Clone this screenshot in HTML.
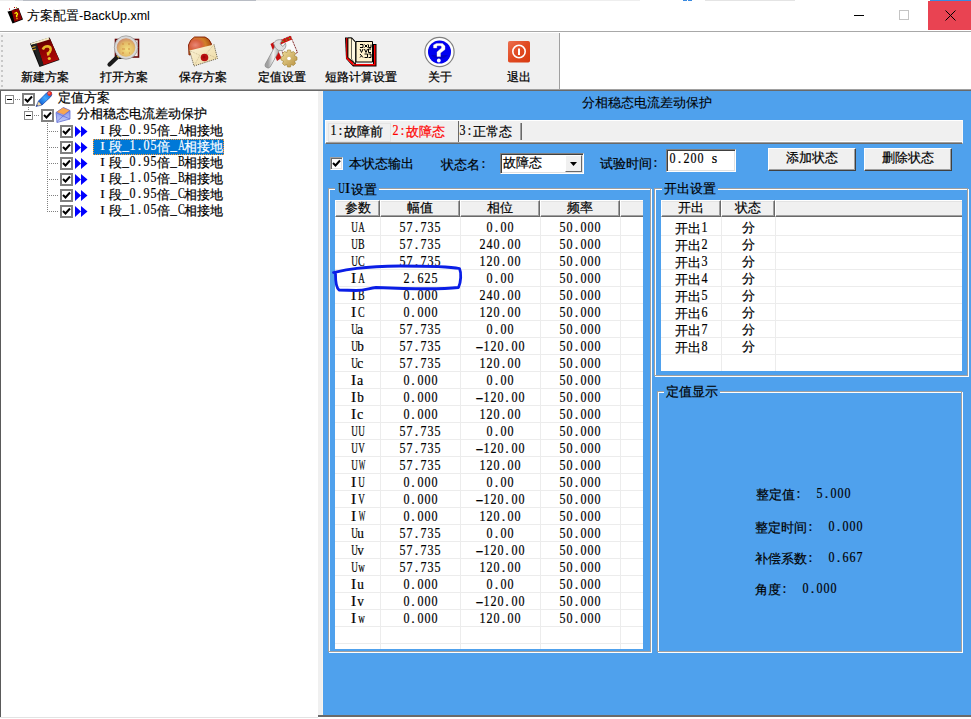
<!DOCTYPE html><html><head><meta charset="utf-8"><style>
html,body{margin:0;padding:0;}
body{width:971px;height:719px;overflow:hidden;position:relative;background:#fff;font-family:"Liberation Sans",sans-serif;}
div{box-sizing:border-box;}
.s{position:absolute;font-size:13px;line-height:16px;white-space:nowrap;color:#000;font-family:"Liberation Mono",monospace;-webkit-text-stroke:0.2px currentColor;}
.s i{-webkit-text-stroke:0.2px currentColor;}
.s i{font-style:normal;display:inline-block;width:7px;text-align:center;position:relative;top:-1px;font-family:"Liberation Serif",serif;font-size:14px;}
.u{position:absolute;font-size:12px;line-height:16px;white-space:nowrap;color:#000;font-family:"Liberation Sans",sans-serif;-webkit-text-stroke:0.25px #000;}
svg{position:absolute;overflow:visible;}
</style></head><body>
<div style="position:absolute;left:0px;top:0px;width:15px;height:1px;background:#eeeeee"></div><div style="position:absolute;left:15px;top:0px;width:8px;height:1px;background:#d8dce2"></div><div style="position:absolute;left:23px;top:0px;width:233px;height:1px;background:#b8bcc4"></div><div style="position:absolute;left:256px;top:0px;width:384px;height:1px;background:#eeeeee"></div><div style="position:absolute;left:683px;top:0px;width:4px;height:1px;background:#3a8ae0"></div><div style="position:absolute;left:688px;top:0px;width:4px;height:1px;background:#3a8ae0"></div><div style="position:absolute;left:705px;top:0px;width:90px;height:1px;background:#e4e4e4"></div><div style="position:absolute;left:930px;top:0px;width:41px;height:1px;background:#3a8ae0"></div><div style="position:absolute;left:0px;top:31px;width:971px;height:1px;background:#a8a8a8"></div><div class="u" style="left:27px;top:8px;font-size:12.5px;line-height:16px;-webkit-text-stroke:0.05px #000;">方案配置-BackUp.xml</div><div style="position:absolute;left:854px;top:15px;width:10px;height:1px;background:#000"></div><div style="position:absolute;left:899px;top:10px;width:10px;height:10px;border:1px solid #c4c4c4"></div><div style="position:absolute;left:928px;top:1px;width:43px;height:29px;background:#e94352"></div><svg style="left:945px;top:10px" width="11" height="11" viewBox="0 0 11 11"><path d="M0.5 0.5 L10.5 10.5 M10.5 0.5 L0.5 10.5" stroke="#000" stroke-width="1"/></svg><div style="position:absolute;left:0px;top:32px;width:971px;height:1px;background:#fff"></div><div style="position:absolute;left:0px;top:33px;width:559px;height:56px;background:#f0f0f0"></div><div style="position:absolute;left:559px;top:33px;width:1px;height:56px;background:#a0a0a0"></div><div style="position:absolute;left:1px;top:35px;width:2px;height:2px;background:#c8c8c8"></div><div style="position:absolute;left:1px;top:40px;width:2px;height:2px;background:#c8c8c8"></div><div style="position:absolute;left:1px;top:45px;width:2px;height:2px;background:#c8c8c8"></div><div style="position:absolute;left:1px;top:50px;width:2px;height:2px;background:#c8c8c8"></div><div style="position:absolute;left:1px;top:55px;width:2px;height:2px;background:#c8c8c8"></div><div style="position:absolute;left:1px;top:60px;width:2px;height:2px;background:#c8c8c8"></div><div style="position:absolute;left:1px;top:65px;width:2px;height:2px;background:#c8c8c8"></div><div style="position:absolute;left:1px;top:70px;width:2px;height:2px;background:#c8c8c8"></div><div style="position:absolute;left:1px;top:75px;width:2px;height:2px;background:#c8c8c8"></div><div style="position:absolute;left:1px;top:80px;width:2px;height:2px;background:#c8c8c8"></div><div style="position:absolute;left:1px;top:85px;width:2px;height:2px;background:#c8c8c8"></div><div style="position:absolute;left:0px;top:89px;width:971px;height:1px;background:#a0a0a0"></div><div style="position:absolute;left:0px;top:90px;width:971px;height:1px;background:#696969"></div><div class="u" style="left:1.0px;top:69px;width:88px;text-align:center;font-size:12.4px;line-height:16px;color:#000">新建方案</div><div class="u" style="left:80.0px;top:69px;width:88px;text-align:center;font-size:12.4px;line-height:16px;color:#000">打开方案</div><div class="u" style="left:159.0px;top:69px;width:88px;text-align:center;font-size:12.4px;line-height:16px;color:#000">保存方案</div><div class="u" style="left:238.0px;top:69px;width:88px;text-align:center;font-size:12.4px;line-height:16px;color:#000">定值设置</div><div class="u" style="left:305.0px;top:69px;width:112px;text-align:center;font-size:12.4px;line-height:16px;color:#000">短路计算设置</div><div class="u" style="left:408.0px;top:69px;width:64px;text-align:center;font-size:12.4px;line-height:16px;color:#000">关于</div><div class="u" style="left:486.5px;top:69px;width:64px;text-align:center;font-size:12.4px;line-height:16px;color:#000">退出</div>
<svg style="left:26px;top:34px" width="36" height="36" viewBox="0 0 36 36">
<defs><linearGradient id="g1" x1="0" y1="0" x2="0.3" y2="1"><stop offset="0" stop-color="#4a0000"/><stop offset="0.45" stop-color="#8a0000"/><stop offset="1" stop-color="#b00808"/></linearGradient></defs>
<path d="M4 9.5 L23.5 3.5 L33.5 26 L13.5 33 Z" fill="#0a0a0a"/>
<path d="M10.5 9.5 L24 4.5 L33 25.5 L17.5 31 Z" fill="url(#g1)"/>
<path d="M4.5 9.5 L22.5 3.5 L23.5 5.5 L5.5 11 Z" fill="#f6ecc4"/>
<path d="M6 10.5 L10.5 9.5 L17.5 31 L14 32 Z" fill="#222"/>
<path d="M6 13.5 L9.5 12.5 M6.5 16 L10 15" stroke="#d8a020" stroke-width="1.3"/>
<path d="M16.8 15.5 Q18 12.3 21.8 12.3 Q25 12.8 24.6 16 Q24.2 18.3 22 19.3 L22.4 21.5" stroke="#e8b828" stroke-width="2.5" fill="none"/>
<circle cx="23.3" cy="24.5" r="1.6" fill="#e8c030"/>
</svg>

<svg style="left:104px;top:34px" width="36" height="36" viewBox="0 0 36 36">
<defs><radialGradient id="g2" cx="0.55" cy="0.6" r="0.6"><stop offset="0" stop-color="#f4e080"/><stop offset="0.55" stop-color="#e4bc68"/><stop offset="1" stop-color="#c88068"/></radialGradient></defs>
<rect x="11.5" y="5.5" width="23" height="17.5" fill="#f8f0e8" stroke="#6a0a0a" stroke-width="1.6"/>
<rect x="15" y="23" width="10" height="2" fill="#111"/>
<path d="M15.5 21 L5.5 30.5" stroke="#1a1a1a" stroke-width="4.2" stroke-linecap="round"/>
<path d="M15.5 21 L13.5 23" stroke="#e0b030" stroke-width="2.5"/>
<circle cx="22" cy="13.5" r="10.5" fill="url(#g2)" stroke="#d8d8d8" stroke-width="2.4"/>
<circle cx="22" cy="13.5" r="11.7" fill="none" stroke="#909090" stroke-width="0.7"/>
<path d="M18 10 h2 M24 10 h2 M18 15 h3 M24 15 h2 M18 19 h2 M25 19 h1" stroke="#c87830" stroke-width="1.2" opacity="0.7"/>
</svg>

<svg style="left:184px;top:34px" width="36" height="36" viewBox="0 0 36 36">
<defs><radialGradient id="g3" cx="0.3" cy="0.45" r="0.75"><stop offset="0" stop-color="#e88878"/><stop offset="0.35" stop-color="#d86040"/><stop offset="0.6" stop-color="#d08028"/><stop offset="1" stop-color="#a04008"/></radialGradient>
<linearGradient id="g3b" x1="0" y1="0" x2="1" y2="1"><stop offset="0" stop-color="#fbf3d8"/><stop offset="1" stop-color="#ecd8a0"/></linearGradient></defs>
<path d="M10.5 3 L21 3 Q25.5 4.5 27.5 10 L25 16 L5 21 L4.5 11 Q6 5.5 10.5 3 Z" fill="url(#g3)" stroke="#801800" stroke-width="0.9"/>
<path d="M5.5 16.5 L30 10.5 L33.5 24.5 L10 32 Z" fill="url(#g3b)"/>
<path d="M30 10.5 L33.5 24.5 L10 32 L5.5 16.5" fill="none" stroke="#3a3020" stroke-width="0.8" stroke-dasharray="1 1"/>
<path d="M5.5 16.5 L19.5 23 L30 10.5 M10 32 L16 21 M33.5 24.5 L23 20" stroke="#b8a880" stroke-width="0.6" fill="none" stroke-dasharray="1 0.8"/>
<circle cx="20.5" cy="23.5" r="3.8" fill="#b81010"/>
<circle cx="20" cy="23" r="1.5" fill="#a00808"/>
</svg>

<svg style="left:263px;top:34px" width="36" height="36" viewBox="0 0 36 36">
<defs><linearGradient id="g4" x1="0" y1="0" x2="1" y2="1"><stop offset="0" stop-color="#f0e0a0"/><stop offset="1" stop-color="#b89040"/></linearGradient>
<linearGradient id="g4b" x1="0" y1="0" x2="1" y2="0"><stop offset="0" stop-color="#a0a0a0"/><stop offset="0.5" stop-color="#f4f4f4"/><stop offset="1" stop-color="#b0b0b0"/></linearGradient></defs>
<path d="M15 7.5 L27.5 2 L34.5 18.5 L22 24 Z" fill="#fafafa" stroke="#6a0000" stroke-width="1" stroke-dasharray="1 0.7"/>
<path d="M15 7.5 L27.5 2 L29 5.5 L16.5 11 Z" fill="#d01010"/>
<circle cx="20" cy="7.5" r="0.8" fill="#60a020"/><circle cx="23.5" cy="6" r="0.8" fill="#60a020"/><circle cx="26.5" cy="4.5" r="0.8" fill="#60a020"/>
<path d="M7.5 10 L11 8 L18.5 24 L14 27 Z" fill="#c81010"/>
<path d="M5 31 L15.5 12" stroke="#909090" stroke-width="6.5" stroke-linecap="round"/>
<path d="M5 31 L15.5 12" stroke="url(#g4b)" stroke-width="5" stroke-linecap="round"/>
<path d="M10.5 9.5 Q13 4.5 19 6 L17 10 L20 12.5 L22.5 9 Q24 14 19.5 16.5 Q15 17.5 12.5 14 Z" fill="#e0e0e0" stroke="#909090" stroke-width="0.8"/>
<g transform="translate(26,24.5)">
<path d="M-1.5 -8.5 L1.5 -8.5 L2 -6 L4.5 -7 L6.5 -5 L5.5 -2.5 L8 -1.5 L8 1.5 L5.5 2.5 L6.5 5 L4.5 7 L2 6 L1.5 8.5 L-1.5 8.5 L-2 6 L-4.5 7 L-6.5 5 L-5.5 2.5 L-8 1.5 L-8 -1.5 L-5.5 -2.5 L-6.5 -5 L-4.5 -7 L-2 -6 Z" fill="url(#g4)" stroke="#a08030" stroke-width="0.6"/>
<circle r="1.8" fill="#fff"/>
</g>
</svg>

<svg style="left:342px;top:34px" width="36" height="36" viewBox="0 0 36 36">
<path d="M3 3.5 L10 3.5 L14 8 L14 31 L4 25 Z" fill="#000"/>
<path d="M4 25 L11 32.5 L34.5 32.5 L34.5 10 L31 10 L31 30.5 L14 30.5 L11 30.5 Z" fill="#000"/>
<path d="M4.2 4 L4.2 24.5 L11 31.5 L11.5 29 L5.5 23.5 L5.5 4 Z" fill="#ff0000"/>
<path d="M11.5 31.5 L33.5 31.5 L33.5 11 L32 11 L32 30 L12 30 Z" fill="#ff0000"/>
<path d="M6 4 L9.5 4 L13.5 8.5 L13.5 30 L6 23.5 Z" fill="#fff2cc" stroke="#000" stroke-width="0.8"/>
<path d="M9.5 4 L13.5 8.5 L13.5 30 L9.5 25 Z" fill="#fff8e0" stroke="#000" stroke-width="0.6"/>
<path d="M14 7.5 L30.5 7.5 L30.5 28 L14 28 Z" fill="#fff2cc" stroke="#000" stroke-width="1"/>
<path d="M18 10.5 H21 V13.5 H18 M22.5 10.5 L25.5 13.5 M25.5 10.5 L22.5 13.5 M26.5 10.5 V13.5 H29 V10.5 M18 15 L19.5 18.5 L21 15 M22.5 15 L24 18.5 L25.5 15 M29 15 H26.5 V18.5 H29 M18 20 L21 23.5 M19.5 21.8 L18 23.5 M22.5 20 H25.5 V23.5 H22.5 M26.5 20 H29 V23.5 H26.5" stroke="#000" stroke-width="1" fill="none"/>
</svg>

<svg style="left:421px;top:34px" width="36" height="36" viewBox="0 0 36 36">
<circle cx="18.5" cy="18" r="14.6" fill="#fff" stroke="#808080" stroke-width="1.2"/>
<circle cx="18.5" cy="18" r="11.5" fill="#0000f0"/>
<path d="M10 21 A11.5 11.5 0 0 0 27 21 Z" fill="#0000b0" opacity="0.6"/>
<path d="M12.5 14 L12.5 11 L15.5 9.5 L21.5 9.5 L24 12 L24 15.5 L19.5 19 L19.5 22.5 L16 22.5 L16 18 L20.5 14 L20.5 12.5 L19.5 11.8 L16.5 11.8 L15.8 12.5 L15.8 14 Z" fill="#fff" stroke="#e8e0c0" stroke-width="0.4"/>
<circle cx="17.8" cy="26.5" r="1.9" fill="#fff"/>
</svg>

<svg style="left:501px;top:36px" width="36" height="36" viewBox="0 0 36 36">
<defs><linearGradient id="g7" x1="0" y1="0" x2="1" y2="1"><stop offset="0" stop-color="#ec7050"/><stop offset="0.5" stop-color="#e04a22"/><stop offset="1" stop-color="#d83a10"/></linearGradient></defs>
<rect x="7" y="5" width="22" height="21.5" rx="1.8" fill="url(#g7)"/>
<circle cx="18" cy="15.5" r="6.2" fill="none" stroke="#fff" stroke-width="1.6"/>
<rect x="17" y="12.5" width="2" height="6.5" fill="#fff"/>
</svg>

<svg style="left:4px;top:4px" width="22" height="22" viewBox="0 0 22 22">
<path d="M3.5 7.5 L14.5 4 L19 15.5 L8.5 19.5 Z" fill="#000"/>
<path d="M7.5 6.5 L14.5 4.5 L18 15 L10.5 18 Z" fill="#900000"/>
<path d="M4 7.5 L9 6 L6 4.5 Z" fill="#fff"/>
<path d="M10.5 9.5 L12.5 8.5 L13.5 10 L12.5 12 L13 13 M12.5 14.5 L13.5 14.5" stroke="#ffff00" stroke-width="1.3" fill="none"/>
<rect x="5" y="4.5" width="1" height="1" fill="#c00000"/><rect x="10" y="3" width="1" height="1" fill="#c00000"/><rect x="12" y="3" width="1" height="1" fill="#a0a020"/>
</svg>
<div style="position:absolute;left:0px;top:91px;width:1px;height:626px;background:#5a5a5a"></div><div style="position:absolute;left:0px;top:717px;width:318px;height:1px;background:#e3e3e3"></div><div style="position:absolute;left:318px;top:91px;width:4px;height:624px;background:#f0f0f0"></div><div style="position:absolute;left:322px;top:91px;width:1px;height:624px;background:#f8f5ef"></div><div style="position:absolute;left:318px;top:715px;width:653px;height:2px;background:#6a6a6a"></div><div style="position:absolute;left:5px;top:95px;width:9px;height:9px;border:1px solid #8a8a8a;background:#fff"></div><div style="position:absolute;left:7px;top:99px;width:5px;height:1px;background:#000"></div><div style="position:absolute;left:15px;top:99px;width:1px;height:1px;background:#808080"></div><div style="position:absolute;left:17px;top:99px;width:1px;height:1px;background:#808080"></div><div style="position:absolute;left:19px;top:99px;width:1px;height:1px;background:#808080"></div><div style="position:absolute;left:22px;top:93px;width:13px;height:13px;border:2px solid #808080;background:#fff"></div><svg style="left:22px;top:93px" width="13" height="13" viewBox="0 0 13 13"><path d="M3 6 L5.5 8.5 L10 3.5" stroke="#000" stroke-width="2" fill="none"/></svg><svg style="left:34px;top:89px" width="20" height="20" viewBox="0 0 20 20">
<defs><linearGradient id="gp" x1="0" y1="1" x2="1" y2="0"><stop offset="0" stop-color="#0a50c8"/><stop offset="0.5" stop-color="#40a8ff"/><stop offset="1" stop-color="#0a50c8"/></linearGradient></defs>
<path d="M4.5 12 L13 3.5 Q15.5 1.5 17.5 3.5 Q18.5 6 16.5 8 L8 16 Z" fill="url(#gp)" stroke="#0838a8" stroke-width="0.7"/>
<path d="M2 17.5 L4.5 12 L8 16 Z" fill="#f0d8a0" stroke="#0838a8" stroke-width="0.6"/>
<path d="M2 17.5 L3 15.5 L4 16.5 Z" fill="#203080"/>
<circle cx="15.6" cy="4.6" r="2.3" fill="#f03020"/>
<circle cx="15" cy="4" r="0.8" fill="#ffa090"/>
</svg><div class="s" style="left:58px;top:91px;">定值方案</div><div style="position:absolute;left:28px;top:107px;width:1px;height:1px;background:#808080"></div><div style="position:absolute;left:28px;top:109px;width:1px;height:1px;background:#808080"></div><div style="position:absolute;left:24px;top:111px;width:9px;height:9px;border:1px solid #8a8a8a;background:#fff"></div><div style="position:absolute;left:26px;top:115px;width:5px;height:1px;background:#000"></div><div style="position:absolute;left:34px;top:115px;width:1px;height:1px;background:#808080"></div><div style="position:absolute;left:36px;top:115px;width:1px;height:1px;background:#808080"></div><div style="position:absolute;left:38px;top:115px;width:1px;height:1px;background:#808080"></div><div style="position:absolute;left:41px;top:109px;width:13px;height:13px;border:2px solid #808080;background:#fff"></div><svg style="left:41px;top:109px" width="13" height="13" viewBox="0 0 13 13"><path d="M3 6 L5.5 8.5 L10 3.5" stroke="#000" stroke-width="2" fill="none"/></svg><svg style="left:34px;top:89px" width="40" height="40" viewBox="0 0 40 40">
<defs><linearGradient id="ge" x1="0" y1="0" x2="0" y2="1"><stop offset="0" stop-color="#7080e8"/><stop offset="1" stop-color="#c8d0f8"/></linearGradient></defs>
<path d="M22 23.5 L29.5 18.5 L36 21.5 L36 30 L23 33.5 Z" fill="url(#ge)" stroke="#5060d0" stroke-width="0.7"/>
<path d="M23 23 L29 18.8 L35.5 21.5 L30 25.5 Z" fill="#f8a850" stroke="#e07040" stroke-width="0.5" stroke-dasharray="0.8 0.6"/>
<path d="M22.5 33 L29 27 L36 30 M23 24 L29 27 L35.5 22" stroke="#5060d0" stroke-width="0.6" fill="none"/>
</svg><div class="s" style="left:77px;top:107px;">分相稳态电流差动保护</div><div style="position:absolute;left:47px;top:123px;width:1px;height:1px;background:#808080"></div><div style="position:absolute;left:47px;top:125px;width:1px;height:1px;background:#808080"></div><div style="position:absolute;left:47px;top:127px;width:1px;height:1px;background:#808080"></div><div style="position:absolute;left:47px;top:129px;width:1px;height:1px;background:#808080"></div><div style="position:absolute;left:47px;top:131px;width:1px;height:1px;background:#808080"></div><div style="position:absolute;left:47px;top:133px;width:1px;height:1px;background:#808080"></div><div style="position:absolute;left:47px;top:135px;width:1px;height:1px;background:#808080"></div><div style="position:absolute;left:47px;top:137px;width:1px;height:1px;background:#808080"></div><div style="position:absolute;left:47px;top:139px;width:1px;height:1px;background:#808080"></div><div style="position:absolute;left:47px;top:141px;width:1px;height:1px;background:#808080"></div><div style="position:absolute;left:47px;top:143px;width:1px;height:1px;background:#808080"></div><div style="position:absolute;left:47px;top:145px;width:1px;height:1px;background:#808080"></div><div style="position:absolute;left:47px;top:147px;width:1px;height:1px;background:#808080"></div><div style="position:absolute;left:47px;top:149px;width:1px;height:1px;background:#808080"></div><div style="position:absolute;left:47px;top:151px;width:1px;height:1px;background:#808080"></div><div style="position:absolute;left:47px;top:153px;width:1px;height:1px;background:#808080"></div><div style="position:absolute;left:47px;top:155px;width:1px;height:1px;background:#808080"></div><div style="position:absolute;left:47px;top:157px;width:1px;height:1px;background:#808080"></div><div style="position:absolute;left:47px;top:159px;width:1px;height:1px;background:#808080"></div><div style="position:absolute;left:47px;top:161px;width:1px;height:1px;background:#808080"></div><div style="position:absolute;left:47px;top:163px;width:1px;height:1px;background:#808080"></div><div style="position:absolute;left:47px;top:165px;width:1px;height:1px;background:#808080"></div><div style="position:absolute;left:47px;top:167px;width:1px;height:1px;background:#808080"></div><div style="position:absolute;left:47px;top:169px;width:1px;height:1px;background:#808080"></div><div style="position:absolute;left:47px;top:171px;width:1px;height:1px;background:#808080"></div><div style="position:absolute;left:47px;top:173px;width:1px;height:1px;background:#808080"></div><div style="position:absolute;left:47px;top:175px;width:1px;height:1px;background:#808080"></div><div style="position:absolute;left:47px;top:177px;width:1px;height:1px;background:#808080"></div><div style="position:absolute;left:47px;top:179px;width:1px;height:1px;background:#808080"></div><div style="position:absolute;left:47px;top:181px;width:1px;height:1px;background:#808080"></div><div style="position:absolute;left:47px;top:183px;width:1px;height:1px;background:#808080"></div><div style="position:absolute;left:47px;top:185px;width:1px;height:1px;background:#808080"></div><div style="position:absolute;left:47px;top:187px;width:1px;height:1px;background:#808080"></div><div style="position:absolute;left:47px;top:189px;width:1px;height:1px;background:#808080"></div><div style="position:absolute;left:47px;top:191px;width:1px;height:1px;background:#808080"></div><div style="position:absolute;left:47px;top:193px;width:1px;height:1px;background:#808080"></div><div style="position:absolute;left:47px;top:195px;width:1px;height:1px;background:#808080"></div><div style="position:absolute;left:47px;top:197px;width:1px;height:1px;background:#808080"></div><div style="position:absolute;left:47px;top:199px;width:1px;height:1px;background:#808080"></div><div style="position:absolute;left:47px;top:201px;width:1px;height:1px;background:#808080"></div><div style="position:absolute;left:47px;top:203px;width:1px;height:1px;background:#808080"></div><div style="position:absolute;left:47px;top:205px;width:1px;height:1px;background:#808080"></div><div style="position:absolute;left:47px;top:207px;width:1px;height:1px;background:#808080"></div><div style="position:absolute;left:47px;top:209px;width:1px;height:1px;background:#808080"></div><div style="position:absolute;left:47px;top:211px;width:1px;height:1px;background:#808080"></div><div style="position:absolute;left:49px;top:131px;width:1px;height:1px;background:#808080"></div><div style="position:absolute;left:51px;top:131px;width:1px;height:1px;background:#808080"></div><div style="position:absolute;left:53px;top:131px;width:1px;height:1px;background:#808080"></div><div style="position:absolute;left:55px;top:131px;width:1px;height:1px;background:#808080"></div><div style="position:absolute;left:57px;top:131px;width:1px;height:1px;background:#808080"></div><div style="position:absolute;left:60px;top:125px;width:13px;height:13px;border:2px solid #808080;background:#fff"></div><svg style="left:60px;top:125px" width="13" height="13" viewBox="0 0 13 13"><path d="M3 6 L5.5 8.5 L10 3.5" stroke="#000" stroke-width="2" fill="none"/></svg><svg style="left:75px;top:126px" width="13" height="11" viewBox="0 0 13 11"><path d="M0 0 L6 5.5 L0 11 Z M6 0 L12.5 5.5 L6 11 Z" fill="#0000ff"/></svg><div class="s" style="left:96px;top:123px;"><span style="display:inline-block;width:13px;text-align:center;font-family:Liberation Serif,serif;font-size:13.5px;position:relative;top:-1px">I</span>段<i style="transform:scaleX(0.94)">_</i><i style="transform:scaleX(0.86)">0</i><i>.</i><i style="transform:scaleX(0.86)">9</i><i style="transform:scaleX(0.86)">5</i>倍<i style="transform:scaleX(0.94)">_</i><i style="transform:scaleX(0.65)">A</i>相接地</div><div style="position:absolute;left:49px;top:147px;width:1px;height:1px;background:#808080"></div><div style="position:absolute;left:51px;top:147px;width:1px;height:1px;background:#808080"></div><div style="position:absolute;left:53px;top:147px;width:1px;height:1px;background:#808080"></div><div style="position:absolute;left:55px;top:147px;width:1px;height:1px;background:#808080"></div><div style="position:absolute;left:57px;top:147px;width:1px;height:1px;background:#808080"></div><div style="position:absolute;left:60px;top:141px;width:13px;height:13px;border:2px solid #808080;background:#fff"></div><svg style="left:60px;top:141px" width="13" height="13" viewBox="0 0 13 13"><path d="M3 6 L5.5 8.5 L10 3.5" stroke="#000" stroke-width="2" fill="none"/></svg><svg style="left:75px;top:142px" width="13" height="11" viewBox="0 0 13 11"><path d="M0 0 L6 5.5 L0 11 Z M6 0 L12.5 5.5 L6 11 Z" fill="#0000ff"/></svg><div style="position:absolute;left:93px;top:139px;width:131px;height:16px;background:#0078d7;outline:1px dotted #ff9a2e;outline-offset:-1px"></div><div class="s" style="left:96px;top:139px;color:#fff;"><span style="display:inline-block;width:13px;text-align:center;font-family:Liberation Serif,serif;font-size:13.5px;position:relative;top:-1px">I</span>段<i style="transform:scaleX(0.94)">_</i><i style="transform:scaleX(0.86)">1</i><i>.</i><i style="transform:scaleX(0.86)">0</i><i style="transform:scaleX(0.86)">5</i>倍<i style="transform:scaleX(0.94)">_</i><i style="transform:scaleX(0.65)">A</i>相接地</div><div style="position:absolute;left:49px;top:163px;width:1px;height:1px;background:#808080"></div><div style="position:absolute;left:51px;top:163px;width:1px;height:1px;background:#808080"></div><div style="position:absolute;left:53px;top:163px;width:1px;height:1px;background:#808080"></div><div style="position:absolute;left:55px;top:163px;width:1px;height:1px;background:#808080"></div><div style="position:absolute;left:57px;top:163px;width:1px;height:1px;background:#808080"></div><div style="position:absolute;left:60px;top:157px;width:13px;height:13px;border:2px solid #808080;background:#fff"></div><svg style="left:60px;top:157px" width="13" height="13" viewBox="0 0 13 13"><path d="M3 6 L5.5 8.5 L10 3.5" stroke="#000" stroke-width="2" fill="none"/></svg><svg style="left:75px;top:158px" width="13" height="11" viewBox="0 0 13 11"><path d="M0 0 L6 5.5 L0 11 Z M6 0 L12.5 5.5 L6 11 Z" fill="#0000ff"/></svg><div class="s" style="left:96px;top:155px;"><span style="display:inline-block;width:13px;text-align:center;font-family:Liberation Serif,serif;font-size:13.5px;position:relative;top:-1px">I</span>段<i style="transform:scaleX(0.94)">_</i><i style="transform:scaleX(0.86)">0</i><i>.</i><i style="transform:scaleX(0.86)">9</i><i style="transform:scaleX(0.86)">5</i>倍<i style="transform:scaleX(0.94)">_</i><i style="transform:scaleX(0.71)">B</i>相接地</div><div style="position:absolute;left:49px;top:179px;width:1px;height:1px;background:#808080"></div><div style="position:absolute;left:51px;top:179px;width:1px;height:1px;background:#808080"></div><div style="position:absolute;left:53px;top:179px;width:1px;height:1px;background:#808080"></div><div style="position:absolute;left:55px;top:179px;width:1px;height:1px;background:#808080"></div><div style="position:absolute;left:57px;top:179px;width:1px;height:1px;background:#808080"></div><div style="position:absolute;left:60px;top:173px;width:13px;height:13px;border:2px solid #808080;background:#fff"></div><svg style="left:60px;top:173px" width="13" height="13" viewBox="0 0 13 13"><path d="M3 6 L5.5 8.5 L10 3.5" stroke="#000" stroke-width="2" fill="none"/></svg><svg style="left:75px;top:174px" width="13" height="11" viewBox="0 0 13 11"><path d="M0 0 L6 5.5 L0 11 Z M6 0 L12.5 5.5 L6 11 Z" fill="#0000ff"/></svg><div class="s" style="left:96px;top:171px;"><span style="display:inline-block;width:13px;text-align:center;font-family:Liberation Serif,serif;font-size:13.5px;position:relative;top:-1px">I</span>段<i style="transform:scaleX(0.94)">_</i><i style="transform:scaleX(0.86)">1</i><i>.</i><i style="transform:scaleX(0.86)">0</i><i style="transform:scaleX(0.86)">5</i>倍<i style="transform:scaleX(0.94)">_</i><i style="transform:scaleX(0.71)">B</i>相接地</div><div style="position:absolute;left:49px;top:195px;width:1px;height:1px;background:#808080"></div><div style="position:absolute;left:51px;top:195px;width:1px;height:1px;background:#808080"></div><div style="position:absolute;left:53px;top:195px;width:1px;height:1px;background:#808080"></div><div style="position:absolute;left:55px;top:195px;width:1px;height:1px;background:#808080"></div><div style="position:absolute;left:57px;top:195px;width:1px;height:1px;background:#808080"></div><div style="position:absolute;left:60px;top:189px;width:13px;height:13px;border:2px solid #808080;background:#fff"></div><svg style="left:60px;top:189px" width="13" height="13" viewBox="0 0 13 13"><path d="M3 6 L5.5 8.5 L10 3.5" stroke="#000" stroke-width="2" fill="none"/></svg><svg style="left:75px;top:190px" width="13" height="11" viewBox="0 0 13 11"><path d="M0 0 L6 5.5 L0 11 Z M6 0 L12.5 5.5 L6 11 Z" fill="#0000ff"/></svg><div class="s" style="left:96px;top:187px;"><span style="display:inline-block;width:13px;text-align:center;font-family:Liberation Serif,serif;font-size:13.5px;position:relative;top:-1px">I</span>段<i style="transform:scaleX(0.94)">_</i><i style="transform:scaleX(0.86)">0</i><i>.</i><i style="transform:scaleX(0.86)">9</i><i style="transform:scaleX(0.86)">5</i>倍<i style="transform:scaleX(0.94)">_</i><i style="transform:scaleX(0.71)">C</i>相接地</div><div style="position:absolute;left:49px;top:211px;width:1px;height:1px;background:#808080"></div><div style="position:absolute;left:51px;top:211px;width:1px;height:1px;background:#808080"></div><div style="position:absolute;left:53px;top:211px;width:1px;height:1px;background:#808080"></div><div style="position:absolute;left:55px;top:211px;width:1px;height:1px;background:#808080"></div><div style="position:absolute;left:57px;top:211px;width:1px;height:1px;background:#808080"></div><div style="position:absolute;left:60px;top:205px;width:13px;height:13px;border:2px solid #808080;background:#fff"></div><svg style="left:60px;top:205px" width="13" height="13" viewBox="0 0 13 13"><path d="M3 6 L5.5 8.5 L10 3.5" stroke="#000" stroke-width="2" fill="none"/></svg><svg style="left:75px;top:206px" width="13" height="11" viewBox="0 0 13 11"><path d="M0 0 L6 5.5 L0 11 Z M6 0 L12.5 5.5 L6 11 Z" fill="#0000ff"/></svg><div class="s" style="left:96px;top:203px;"><span style="display:inline-block;width:13px;text-align:center;font-family:Liberation Serif,serif;font-size:13.5px;position:relative;top:-1px">I</span>段<i style="transform:scaleX(0.94)">_</i><i style="transform:scaleX(0.86)">1</i><i>.</i><i style="transform:scaleX(0.86)">0</i><i style="transform:scaleX(0.86)">5</i>倍<i style="transform:scaleX(0.94)">_</i><i style="transform:scaleX(0.71)">C</i>相接地</div><div style="position:absolute;left:323px;top:91px;width:648px;height:624px;background:#4fa1ed"></div><div class="u" style="left:323px;top:95px;width:648px;text-align:center;font-size:13px;line-height:16px;-webkit-text-stroke:0.1px #000">分相稳态电流差动保护</div><div style="position:absolute;left:325px;top:120px;width:638px;height:24px;background:#f0f0f0;border-top:1px solid #fff;border-left:1px solid #fff;border-bottom:1px solid #696969;border-right:1px solid #f8f8f8;box-shadow:inset 0 -1px 0 #a0a0a0, inset 0 -2px 0 #fff"></div><div style="position:absolute;left:328px;top:123px;width:63px;height:19px;border:1px solid #e4e4e4;background:#f0f0f0"></div><div class="s" style="left:330px;top:124px;"><i style="transform:scaleX(0.86)">1</i><i>:</i>故障前</div><div style="position:absolute;left:391px;top:121px;width:68px;height:21px;background:#f0f0f0;border-right:1px solid #696969"></div><div class="s" style="left:392px;top:124px;color:#ff0000"><i style="transform:scaleX(0.86)">2</i><i>:</i>故障态</div><div style="position:absolute;left:459px;top:123px;width:63px;height:17px;background:#f0f0f0;border-right:1px solid #696969;box-shadow:inset -1px 0 0 #a0a0a0"></div><div class="s" style="left:459px;top:124px;"><i style="transform:scaleX(0.86)">3</i><i>:</i>正常态</div><div style="position:absolute;left:330px;top:157px;width:13px;height:13px;border-top:1px solid #a0a0a0;border-left:1px solid #a0a0a0;border-right:1px solid #fff;border-bottom:1px solid #fff;background:#fff;box-shadow:inset 1px 1px 0 #696969, inset -1px -1px 0 #e3e3e3"></div><svg style="left:330px;top:157px" width="13" height="13" viewBox="0 0 13 13"><path d="M3 6 L5.5 8.5 L10 3.5" stroke="#000" stroke-width="2" fill="none"/></svg><div class="s" style="left:349px;top:157px;">本状态输出</div><div class="s" style="left:441px;top:157px;">状态名<i>:</i></div><div style="position:absolute;left:500px;top:153px;width:84px;height:21px;background:#fff;border-top:1px solid #808080;border-left:1px solid #808080;border-bottom:1px solid #fff;border-right:1px solid #fff;box-shadow:inset 1px 1px 0 #404040, inset -1px -1px 0 #e0e0e0"></div><div style="position:absolute;left:565px;top:155px;width:17px;height:17px;background:#f0f0f0;border-right:1px solid #696969;border-bottom:1px solid #696969;border-top:1px solid #fff;border-left:1px solid #fff"></div><svg style="left:570px;top:162px" width="7" height="4" viewBox="0 0 7 4"><path d="M0 0 H7 L3.5 4 Z" fill="#000"/></svg><div class="s" style="left:503px;top:156px;">故障态</div><div class="s" style="left:600px;top:156px;">试验时间<i>:</i></div><div style="position:absolute;left:666px;top:149px;width:70px;height:23px;background:#fff;border-top:1px solid #808080;border-left:1px solid #808080;border-bottom:1px solid #fff;border-right:1px solid #fff;box-shadow:inset 1px 1px 0 #404040, inset -1px -1px 0 #e0e0e0"></div><div class="s" style="left:669px;top:152px;"><i style="transform:scaleX(0.86)">0</i><i>.</i><i style="transform:scaleX(0.86)">2</i><i style="transform:scaleX(0.86)">0</i><i style="transform:scaleX(0.86)">0</i><i>&nbsp;</i><i>s</i></div><div style="position:absolute;left:768px;top:148px;width:88px;height:23px;background:#f0f0f0;border-top:1px solid #fff;border-left:1px solid #fff;border-right:1px solid #404040;border-bottom:1px solid #404040;box-shadow:inset -1px -1px 0 #a0a0a0"></div><div class="s" style="left:768px;top:151px;width:88px;text-align:center;">添加状态</div><div style="position:absolute;left:864px;top:148px;width:88px;height:23px;background:#f0f0f0;border-top:1px solid #fff;border-left:1px solid #fff;border-right:1px solid #404040;border-bottom:1px solid #404040;box-shadow:inset -1px -1px 0 #a0a0a0"></div><div class="s" style="left:864px;top:151px;width:88px;text-align:center;">删除状态</div><div style="position:absolute;left:328px;top:188px;width:323px;height:464px;border:1px solid #a0a0a0;box-shadow:1px 1px 0 #fff inset, 1px 1px 0 #fff"></div><div class="s" style="left:335px;top:182px;background:#4fa1ed;padding:0 2px 0 2px"><i style="transform:scaleX(0.65)">U</i><i style="transform:scaleX(1.1)">I</i>设置</div><div style="position:absolute;left:654px;top:188px;width:314px;height:188px;border:1px solid #a0a0a0;box-shadow:1px 1px 0 #fff inset, 1px 1px 0 #fff"></div><div class="s" style="left:662px;top:182px;background:#4fa1ed;padding:0 2px 0 2px">开出设置</div><div style="position:absolute;left:657px;top:391px;width:305px;height:261px;border:1px solid #a0a0a0;box-shadow:1px 1px 0 #fff inset, 1px 1px 0 #fff"></div><div class="s" style="left:664px;top:385px;background:#4fa1ed;padding:0 2px 0 2px">定值显示</div><div style="position:absolute;left:335px;top:200px;width:308px;height:449px;background:#fff"></div><div style="position:absolute;left:335px;top:200px;width:45px;height:17px;background:#f0f0f0;border-top:1px solid #fff;border-left:1px solid #fff;border-right:1px solid #696969;border-bottom:1px solid #696969;box-shadow:inset -1px -1px 0 #a0a0a0, inset 0 1px 0 #e3e3e3"></div><div class="s" style="left:335px;top:201px;width:45px;text-align:center;">参数</div><div style="position:absolute;left:380px;top:200px;width:80px;height:17px;background:#f0f0f0;border-top:1px solid #fff;border-left:1px solid #fff;border-right:1px solid #696969;border-bottom:1px solid #696969;box-shadow:inset -1px -1px 0 #a0a0a0, inset 0 1px 0 #e3e3e3"></div><div class="s" style="left:380px;top:201px;width:80px;text-align:center;">幅值</div><div style="position:absolute;left:460px;top:200px;width:80px;height:17px;background:#f0f0f0;border-top:1px solid #fff;border-left:1px solid #fff;border-right:1px solid #696969;border-bottom:1px solid #696969;box-shadow:inset -1px -1px 0 #a0a0a0, inset 0 1px 0 #e3e3e3"></div><div class="s" style="left:460px;top:201px;width:80px;text-align:center;">相位</div><div style="position:absolute;left:540px;top:200px;width:80px;height:17px;background:#f0f0f0;border-top:1px solid #fff;border-left:1px solid #fff;border-right:1px solid #696969;border-bottom:1px solid #696969;box-shadow:inset -1px -1px 0 #a0a0a0, inset 0 1px 0 #e3e3e3"></div><div class="s" style="left:540px;top:201px;width:80px;text-align:center;">频率</div><div style="position:absolute;left:620px;top:200px;width:23px;height:17px;background:#f0f0f0;border-top:1px solid #fff;border-left:1px solid #fff;border-bottom:1px solid #696969;box-shadow:inset 0 -1px 0 #a0a0a0, inset 0 1px 0 #e3e3e3"></div><div style="position:absolute;left:335px;top:235px;width:308px;height:1px;background:#ececec"></div><div style="position:absolute;left:335px;top:252px;width:308px;height:1px;background:#ececec"></div><div style="position:absolute;left:335px;top:269px;width:308px;height:1px;background:#ececec"></div><div style="position:absolute;left:335px;top:286px;width:308px;height:1px;background:#ececec"></div><div style="position:absolute;left:335px;top:303px;width:308px;height:1px;background:#ececec"></div><div style="position:absolute;left:335px;top:320px;width:308px;height:1px;background:#ececec"></div><div style="position:absolute;left:335px;top:337px;width:308px;height:1px;background:#ececec"></div><div style="position:absolute;left:335px;top:354px;width:308px;height:1px;background:#ececec"></div><div style="position:absolute;left:335px;top:371px;width:308px;height:1px;background:#ececec"></div><div style="position:absolute;left:335px;top:388px;width:308px;height:1px;background:#ececec"></div><div style="position:absolute;left:335px;top:405px;width:308px;height:1px;background:#ececec"></div><div style="position:absolute;left:335px;top:422px;width:308px;height:1px;background:#ececec"></div><div style="position:absolute;left:335px;top:439px;width:308px;height:1px;background:#ececec"></div><div style="position:absolute;left:335px;top:456px;width:308px;height:1px;background:#ececec"></div><div style="position:absolute;left:335px;top:473px;width:308px;height:1px;background:#ececec"></div><div style="position:absolute;left:335px;top:490px;width:308px;height:1px;background:#ececec"></div><div style="position:absolute;left:335px;top:507px;width:308px;height:1px;background:#ececec"></div><div style="position:absolute;left:335px;top:524px;width:308px;height:1px;background:#ececec"></div><div style="position:absolute;left:335px;top:541px;width:308px;height:1px;background:#ececec"></div><div style="position:absolute;left:335px;top:558px;width:308px;height:1px;background:#ececec"></div><div style="position:absolute;left:335px;top:575px;width:308px;height:1px;background:#ececec"></div><div style="position:absolute;left:335px;top:592px;width:308px;height:1px;background:#ececec"></div><div style="position:absolute;left:335px;top:609px;width:308px;height:1px;background:#ececec"></div><div style="position:absolute;left:335px;top:626px;width:308px;height:1px;background:#ececec"></div><div style="position:absolute;left:335px;top:643px;width:308px;height:1px;background:#ececec"></div><div style="position:absolute;left:380px;top:217px;width:1px;height:432px;background:#ececec"></div><div style="position:absolute;left:460px;top:217px;width:1px;height:432px;background:#ececec"></div><div style="position:absolute;left:540px;top:217px;width:1px;height:432px;background:#ececec"></div><div style="position:absolute;left:620px;top:217px;width:1px;height:432px;background:#ececec"></div><div class="s" style="left:334px;top:221px;width:45px;text-align:center;"><i style="transform:scaleX(0.65)">U</i><i style="transform:scaleX(0.65)">A</i></div><div class="s" style="left:380px;top:221px;width:80px;text-align:center;"><i style="transform:scaleX(0.86)">5</i><i style="transform:scaleX(0.86)">7</i><i>.</i><i style="transform:scaleX(0.86)">7</i><i style="transform:scaleX(0.86)">3</i><i style="transform:scaleX(0.86)">5</i></div><div class="s" style="left:460px;top:221px;width:80px;text-align:center;"><i style="transform:scaleX(0.86)">0</i><i>.</i><i style="transform:scaleX(0.86)">0</i><i style="transform:scaleX(0.86)">0</i></div><div class="s" style="left:540px;top:221px;width:80px;text-align:center;"><i style="transform:scaleX(0.86)">5</i><i style="transform:scaleX(0.86)">0</i><i>.</i><i style="transform:scaleX(0.86)">0</i><i style="transform:scaleX(0.86)">0</i><i style="transform:scaleX(0.86)">0</i></div><div class="s" style="left:334px;top:238px;width:45px;text-align:center;"><i style="transform:scaleX(0.65)">U</i><i style="transform:scaleX(0.71)">B</i></div><div class="s" style="left:380px;top:238px;width:80px;text-align:center;"><i style="transform:scaleX(0.86)">5</i><i style="transform:scaleX(0.86)">7</i><i>.</i><i style="transform:scaleX(0.86)">7</i><i style="transform:scaleX(0.86)">3</i><i style="transform:scaleX(0.86)">5</i></div><div class="s" style="left:460px;top:238px;width:80px;text-align:center;"><i style="transform:scaleX(0.86)">2</i><i style="transform:scaleX(0.86)">4</i><i style="transform:scaleX(0.86)">0</i><i>.</i><i style="transform:scaleX(0.86)">0</i><i style="transform:scaleX(0.86)">0</i></div><div class="s" style="left:540px;top:238px;width:80px;text-align:center;"><i style="transform:scaleX(0.86)">5</i><i style="transform:scaleX(0.86)">0</i><i>.</i><i style="transform:scaleX(0.86)">0</i><i style="transform:scaleX(0.86)">0</i><i style="transform:scaleX(0.86)">0</i></div><div class="s" style="left:334px;top:255px;width:45px;text-align:center;"><i style="transform:scaleX(0.65)">U</i><i style="transform:scaleX(0.71)">C</i></div><div class="s" style="left:380px;top:255px;width:80px;text-align:center;"><i style="transform:scaleX(0.86)">5</i><i style="transform:scaleX(0.86)">7</i><i>.</i><i style="transform:scaleX(0.86)">7</i><i style="transform:scaleX(0.86)">3</i><i style="transform:scaleX(0.86)">5</i></div><div class="s" style="left:460px;top:255px;width:80px;text-align:center;"><i style="transform:scaleX(0.86)">1</i><i style="transform:scaleX(0.86)">2</i><i style="transform:scaleX(0.86)">0</i><i>.</i><i style="transform:scaleX(0.86)">0</i><i style="transform:scaleX(0.86)">0</i></div><div class="s" style="left:540px;top:255px;width:80px;text-align:center;"><i style="transform:scaleX(0.86)">5</i><i style="transform:scaleX(0.86)">0</i><i>.</i><i style="transform:scaleX(0.86)">0</i><i style="transform:scaleX(0.86)">0</i><i style="transform:scaleX(0.86)">0</i></div><div class="s" style="left:334px;top:272px;width:45px;text-align:center;"><i style="transform:scaleX(1.1)">I</i><i style="transform:scaleX(0.65)">A</i></div><div class="s" style="left:380px;top:272px;width:80px;text-align:center;"><i style="transform:scaleX(0.86)">2</i><i>.</i><i style="transform:scaleX(0.86)">6</i><i style="transform:scaleX(0.86)">2</i><i style="transform:scaleX(0.86)">5</i></div><div class="s" style="left:460px;top:272px;width:80px;text-align:center;"><i style="transform:scaleX(0.86)">0</i><i>.</i><i style="transform:scaleX(0.86)">0</i><i style="transform:scaleX(0.86)">0</i></div><div class="s" style="left:540px;top:272px;width:80px;text-align:center;"><i style="transform:scaleX(0.86)">5</i><i style="transform:scaleX(0.86)">0</i><i>.</i><i style="transform:scaleX(0.86)">0</i><i style="transform:scaleX(0.86)">0</i><i style="transform:scaleX(0.86)">0</i></div><div class="s" style="left:334px;top:289px;width:45px;text-align:center;"><i style="transform:scaleX(1.1)">I</i><i style="transform:scaleX(0.71)">B</i></div><div class="s" style="left:380px;top:289px;width:80px;text-align:center;"><i style="transform:scaleX(0.86)">0</i><i>.</i><i style="transform:scaleX(0.86)">0</i><i style="transform:scaleX(0.86)">0</i><i style="transform:scaleX(0.86)">0</i></div><div class="s" style="left:460px;top:289px;width:80px;text-align:center;"><i style="transform:scaleX(0.86)">2</i><i style="transform:scaleX(0.86)">4</i><i style="transform:scaleX(0.86)">0</i><i>.</i><i style="transform:scaleX(0.86)">0</i><i style="transform:scaleX(0.86)">0</i></div><div class="s" style="left:540px;top:289px;width:80px;text-align:center;"><i style="transform:scaleX(0.86)">5</i><i style="transform:scaleX(0.86)">0</i><i>.</i><i style="transform:scaleX(0.86)">0</i><i style="transform:scaleX(0.86)">0</i><i style="transform:scaleX(0.86)">0</i></div><div class="s" style="left:334px;top:306px;width:45px;text-align:center;"><i style="transform:scaleX(1.1)">I</i><i style="transform:scaleX(0.71)">C</i></div><div class="s" style="left:380px;top:306px;width:80px;text-align:center;"><i style="transform:scaleX(0.86)">0</i><i>.</i><i style="transform:scaleX(0.86)">0</i><i style="transform:scaleX(0.86)">0</i><i style="transform:scaleX(0.86)">0</i></div><div class="s" style="left:460px;top:306px;width:80px;text-align:center;"><i style="transform:scaleX(0.86)">1</i><i style="transform:scaleX(0.86)">2</i><i style="transform:scaleX(0.86)">0</i><i>.</i><i style="transform:scaleX(0.86)">0</i><i style="transform:scaleX(0.86)">0</i></div><div class="s" style="left:540px;top:306px;width:80px;text-align:center;"><i style="transform:scaleX(0.86)">5</i><i style="transform:scaleX(0.86)">0</i><i>.</i><i style="transform:scaleX(0.86)">0</i><i style="transform:scaleX(0.86)">0</i><i style="transform:scaleX(0.86)">0</i></div><div class="s" style="left:334px;top:323px;width:45px;text-align:center;"><i style="transform:scaleX(0.65)">U</i><i>a</i></div><div class="s" style="left:380px;top:323px;width:80px;text-align:center;"><i style="transform:scaleX(0.86)">5</i><i style="transform:scaleX(0.86)">7</i><i>.</i><i style="transform:scaleX(0.86)">7</i><i style="transform:scaleX(0.86)">3</i><i style="transform:scaleX(0.86)">5</i></div><div class="s" style="left:460px;top:323px;width:80px;text-align:center;"><i style="transform:scaleX(0.86)">0</i><i>.</i><i style="transform:scaleX(0.86)">0</i><i style="transform:scaleX(0.86)">0</i></div><div class="s" style="left:540px;top:323px;width:80px;text-align:center;"><i style="transform:scaleX(0.86)">5</i><i style="transform:scaleX(0.86)">0</i><i>.</i><i style="transform:scaleX(0.86)">0</i><i style="transform:scaleX(0.86)">0</i><i style="transform:scaleX(0.86)">0</i></div><div class="s" style="left:334px;top:340px;width:45px;text-align:center;"><i style="transform:scaleX(0.65)">U</i><i style="transform:scaleX(0.94)">b</i></div><div class="s" style="left:380px;top:340px;width:80px;text-align:center;"><i style="transform:scaleX(0.86)">5</i><i style="transform:scaleX(0.86)">7</i><i>.</i><i style="transform:scaleX(0.86)">7</i><i style="transform:scaleX(0.86)">3</i><i style="transform:scaleX(0.86)">5</i></div><div class="s" style="left:460px;top:340px;width:80px;text-align:center;"><i style="transform:scaleX(1.7)">-</i><i style="transform:scaleX(0.86)">1</i><i style="transform:scaleX(0.86)">2</i><i style="transform:scaleX(0.86)">0</i><i>.</i><i style="transform:scaleX(0.86)">0</i><i style="transform:scaleX(0.86)">0</i></div><div class="s" style="left:540px;top:340px;width:80px;text-align:center;"><i style="transform:scaleX(0.86)">5</i><i style="transform:scaleX(0.86)">0</i><i>.</i><i style="transform:scaleX(0.86)">0</i><i style="transform:scaleX(0.86)">0</i><i style="transform:scaleX(0.86)">0</i></div><div class="s" style="left:334px;top:357px;width:45px;text-align:center;"><i style="transform:scaleX(0.65)">U</i><i>c</i></div><div class="s" style="left:380px;top:357px;width:80px;text-align:center;"><i style="transform:scaleX(0.86)">5</i><i style="transform:scaleX(0.86)">7</i><i>.</i><i style="transform:scaleX(0.86)">7</i><i style="transform:scaleX(0.86)">3</i><i style="transform:scaleX(0.86)">5</i></div><div class="s" style="left:460px;top:357px;width:80px;text-align:center;"><i style="transform:scaleX(0.86)">1</i><i style="transform:scaleX(0.86)">2</i><i style="transform:scaleX(0.86)">0</i><i>.</i><i style="transform:scaleX(0.86)">0</i><i style="transform:scaleX(0.86)">0</i></div><div class="s" style="left:540px;top:357px;width:80px;text-align:center;"><i style="transform:scaleX(0.86)">5</i><i style="transform:scaleX(0.86)">0</i><i>.</i><i style="transform:scaleX(0.86)">0</i><i style="transform:scaleX(0.86)">0</i><i style="transform:scaleX(0.86)">0</i></div><div class="s" style="left:334px;top:374px;width:45px;text-align:center;"><i style="transform:scaleX(1.1)">I</i><i>a</i></div><div class="s" style="left:380px;top:374px;width:80px;text-align:center;"><i style="transform:scaleX(0.86)">0</i><i>.</i><i style="transform:scaleX(0.86)">0</i><i style="transform:scaleX(0.86)">0</i><i style="transform:scaleX(0.86)">0</i></div><div class="s" style="left:460px;top:374px;width:80px;text-align:center;"><i style="transform:scaleX(0.86)">0</i><i>.</i><i style="transform:scaleX(0.86)">0</i><i style="transform:scaleX(0.86)">0</i></div><div class="s" style="left:540px;top:374px;width:80px;text-align:center;"><i style="transform:scaleX(0.86)">5</i><i style="transform:scaleX(0.86)">0</i><i>.</i><i style="transform:scaleX(0.86)">0</i><i style="transform:scaleX(0.86)">0</i><i style="transform:scaleX(0.86)">0</i></div><div class="s" style="left:334px;top:391px;width:45px;text-align:center;"><i style="transform:scaleX(1.1)">I</i><i style="transform:scaleX(0.94)">b</i></div><div class="s" style="left:380px;top:391px;width:80px;text-align:center;"><i style="transform:scaleX(0.86)">0</i><i>.</i><i style="transform:scaleX(0.86)">0</i><i style="transform:scaleX(0.86)">0</i><i style="transform:scaleX(0.86)">0</i></div><div class="s" style="left:460px;top:391px;width:80px;text-align:center;"><i style="transform:scaleX(1.7)">-</i><i style="transform:scaleX(0.86)">1</i><i style="transform:scaleX(0.86)">2</i><i style="transform:scaleX(0.86)">0</i><i>.</i><i style="transform:scaleX(0.86)">0</i><i style="transform:scaleX(0.86)">0</i></div><div class="s" style="left:540px;top:391px;width:80px;text-align:center;"><i style="transform:scaleX(0.86)">5</i><i style="transform:scaleX(0.86)">0</i><i>.</i><i style="transform:scaleX(0.86)">0</i><i style="transform:scaleX(0.86)">0</i><i style="transform:scaleX(0.86)">0</i></div><div class="s" style="left:334px;top:408px;width:45px;text-align:center;"><i style="transform:scaleX(1.1)">I</i><i>c</i></div><div class="s" style="left:380px;top:408px;width:80px;text-align:center;"><i style="transform:scaleX(0.86)">0</i><i>.</i><i style="transform:scaleX(0.86)">0</i><i style="transform:scaleX(0.86)">0</i><i style="transform:scaleX(0.86)">0</i></div><div class="s" style="left:460px;top:408px;width:80px;text-align:center;"><i style="transform:scaleX(0.86)">1</i><i style="transform:scaleX(0.86)">2</i><i style="transform:scaleX(0.86)">0</i><i>.</i><i style="transform:scaleX(0.86)">0</i><i style="transform:scaleX(0.86)">0</i></div><div class="s" style="left:540px;top:408px;width:80px;text-align:center;"><i style="transform:scaleX(0.86)">5</i><i style="transform:scaleX(0.86)">0</i><i>.</i><i style="transform:scaleX(0.86)">0</i><i style="transform:scaleX(0.86)">0</i><i style="transform:scaleX(0.86)">0</i></div><div class="s" style="left:334px;top:425px;width:45px;text-align:center;"><i style="transform:scaleX(0.65)">U</i><i style="transform:scaleX(0.65)">U</i></div><div class="s" style="left:380px;top:425px;width:80px;text-align:center;"><i style="transform:scaleX(0.86)">5</i><i style="transform:scaleX(0.86)">7</i><i>.</i><i style="transform:scaleX(0.86)">7</i><i style="transform:scaleX(0.86)">3</i><i style="transform:scaleX(0.86)">5</i></div><div class="s" style="left:460px;top:425px;width:80px;text-align:center;"><i style="transform:scaleX(0.86)">0</i><i>.</i><i style="transform:scaleX(0.86)">0</i><i style="transform:scaleX(0.86)">0</i></div><div class="s" style="left:540px;top:425px;width:80px;text-align:center;"><i style="transform:scaleX(0.86)">5</i><i style="transform:scaleX(0.86)">0</i><i>.</i><i style="transform:scaleX(0.86)">0</i><i style="transform:scaleX(0.86)">0</i><i style="transform:scaleX(0.86)">0</i></div><div class="s" style="left:334px;top:442px;width:45px;text-align:center;"><i style="transform:scaleX(0.65)">U</i><i style="transform:scaleX(0.65)">V</i></div><div class="s" style="left:380px;top:442px;width:80px;text-align:center;"><i style="transform:scaleX(0.86)">5</i><i style="transform:scaleX(0.86)">7</i><i>.</i><i style="transform:scaleX(0.86)">7</i><i style="transform:scaleX(0.86)">3</i><i style="transform:scaleX(0.86)">5</i></div><div class="s" style="left:460px;top:442px;width:80px;text-align:center;"><i style="transform:scaleX(1.7)">-</i><i style="transform:scaleX(0.86)">1</i><i style="transform:scaleX(0.86)">2</i><i style="transform:scaleX(0.86)">0</i><i>.</i><i style="transform:scaleX(0.86)">0</i><i style="transform:scaleX(0.86)">0</i></div><div class="s" style="left:540px;top:442px;width:80px;text-align:center;"><i style="transform:scaleX(0.86)">5</i><i style="transform:scaleX(0.86)">0</i><i>.</i><i style="transform:scaleX(0.86)">0</i><i style="transform:scaleX(0.86)">0</i><i style="transform:scaleX(0.86)">0</i></div><div class="s" style="left:334px;top:459px;width:45px;text-align:center;"><i style="transform:scaleX(0.65)">U</i><i style="transform:scaleX(0.50)">W</i></div><div class="s" style="left:380px;top:459px;width:80px;text-align:center;"><i style="transform:scaleX(0.86)">5</i><i style="transform:scaleX(0.86)">7</i><i>.</i><i style="transform:scaleX(0.86)">7</i><i style="transform:scaleX(0.86)">3</i><i style="transform:scaleX(0.86)">5</i></div><div class="s" style="left:460px;top:459px;width:80px;text-align:center;"><i style="transform:scaleX(0.86)">1</i><i style="transform:scaleX(0.86)">2</i><i style="transform:scaleX(0.86)">0</i><i>.</i><i style="transform:scaleX(0.86)">0</i><i style="transform:scaleX(0.86)">0</i></div><div class="s" style="left:540px;top:459px;width:80px;text-align:center;"><i style="transform:scaleX(0.86)">5</i><i style="transform:scaleX(0.86)">0</i><i>.</i><i style="transform:scaleX(0.86)">0</i><i style="transform:scaleX(0.86)">0</i><i style="transform:scaleX(0.86)">0</i></div><div class="s" style="left:334px;top:476px;width:45px;text-align:center;"><i style="transform:scaleX(1.1)">I</i><i style="transform:scaleX(0.65)">U</i></div><div class="s" style="left:380px;top:476px;width:80px;text-align:center;"><i style="transform:scaleX(0.86)">0</i><i>.</i><i style="transform:scaleX(0.86)">0</i><i style="transform:scaleX(0.86)">0</i><i style="transform:scaleX(0.86)">0</i></div><div class="s" style="left:460px;top:476px;width:80px;text-align:center;"><i style="transform:scaleX(0.86)">0</i><i>.</i><i style="transform:scaleX(0.86)">0</i><i style="transform:scaleX(0.86)">0</i></div><div class="s" style="left:540px;top:476px;width:80px;text-align:center;"><i style="transform:scaleX(0.86)">5</i><i style="transform:scaleX(0.86)">0</i><i>.</i><i style="transform:scaleX(0.86)">0</i><i style="transform:scaleX(0.86)">0</i><i style="transform:scaleX(0.86)">0</i></div><div class="s" style="left:334px;top:493px;width:45px;text-align:center;"><i style="transform:scaleX(1.1)">I</i><i style="transform:scaleX(0.65)">V</i></div><div class="s" style="left:380px;top:493px;width:80px;text-align:center;"><i style="transform:scaleX(0.86)">0</i><i>.</i><i style="transform:scaleX(0.86)">0</i><i style="transform:scaleX(0.86)">0</i><i style="transform:scaleX(0.86)">0</i></div><div class="s" style="left:460px;top:493px;width:80px;text-align:center;"><i style="transform:scaleX(1.7)">-</i><i style="transform:scaleX(0.86)">1</i><i style="transform:scaleX(0.86)">2</i><i style="transform:scaleX(0.86)">0</i><i>.</i><i style="transform:scaleX(0.86)">0</i><i style="transform:scaleX(0.86)">0</i></div><div class="s" style="left:540px;top:493px;width:80px;text-align:center;"><i style="transform:scaleX(0.86)">5</i><i style="transform:scaleX(0.86)">0</i><i>.</i><i style="transform:scaleX(0.86)">0</i><i style="transform:scaleX(0.86)">0</i><i style="transform:scaleX(0.86)">0</i></div><div class="s" style="left:334px;top:510px;width:45px;text-align:center;"><i style="transform:scaleX(1.1)">I</i><i style="transform:scaleX(0.50)">W</i></div><div class="s" style="left:380px;top:510px;width:80px;text-align:center;"><i style="transform:scaleX(0.86)">0</i><i>.</i><i style="transform:scaleX(0.86)">0</i><i style="transform:scaleX(0.86)">0</i><i style="transform:scaleX(0.86)">0</i></div><div class="s" style="left:460px;top:510px;width:80px;text-align:center;"><i style="transform:scaleX(0.86)">1</i><i style="transform:scaleX(0.86)">2</i><i style="transform:scaleX(0.86)">0</i><i>.</i><i style="transform:scaleX(0.86)">0</i><i style="transform:scaleX(0.86)">0</i></div><div class="s" style="left:540px;top:510px;width:80px;text-align:center;"><i style="transform:scaleX(0.86)">5</i><i style="transform:scaleX(0.86)">0</i><i>.</i><i style="transform:scaleX(0.86)">0</i><i style="transform:scaleX(0.86)">0</i><i style="transform:scaleX(0.86)">0</i></div><div class="s" style="left:334px;top:527px;width:45px;text-align:center;"><i style="transform:scaleX(0.65)">U</i><i style="transform:scaleX(0.94)">u</i></div><div class="s" style="left:380px;top:527px;width:80px;text-align:center;"><i style="transform:scaleX(0.86)">5</i><i style="transform:scaleX(0.86)">7</i><i>.</i><i style="transform:scaleX(0.86)">7</i><i style="transform:scaleX(0.86)">3</i><i style="transform:scaleX(0.86)">5</i></div><div class="s" style="left:460px;top:527px;width:80px;text-align:center;"><i style="transform:scaleX(0.86)">0</i><i>.</i><i style="transform:scaleX(0.86)">0</i><i style="transform:scaleX(0.86)">0</i></div><div class="s" style="left:540px;top:527px;width:80px;text-align:center;"><i style="transform:scaleX(0.86)">5</i><i style="transform:scaleX(0.86)">0</i><i>.</i><i style="transform:scaleX(0.86)">0</i><i style="transform:scaleX(0.86)">0</i><i style="transform:scaleX(0.86)">0</i></div><div class="s" style="left:334px;top:544px;width:45px;text-align:center;"><i style="transform:scaleX(0.65)">U</i><i style="transform:scaleX(0.94)">v</i></div><div class="s" style="left:380px;top:544px;width:80px;text-align:center;"><i style="transform:scaleX(0.86)">5</i><i style="transform:scaleX(0.86)">7</i><i>.</i><i style="transform:scaleX(0.86)">7</i><i style="transform:scaleX(0.86)">3</i><i style="transform:scaleX(0.86)">5</i></div><div class="s" style="left:460px;top:544px;width:80px;text-align:center;"><i style="transform:scaleX(1.7)">-</i><i style="transform:scaleX(0.86)">1</i><i style="transform:scaleX(0.86)">2</i><i style="transform:scaleX(0.86)">0</i><i>.</i><i style="transform:scaleX(0.86)">0</i><i style="transform:scaleX(0.86)">0</i></div><div class="s" style="left:540px;top:544px;width:80px;text-align:center;"><i style="transform:scaleX(0.86)">5</i><i style="transform:scaleX(0.86)">0</i><i>.</i><i style="transform:scaleX(0.86)">0</i><i style="transform:scaleX(0.86)">0</i><i style="transform:scaleX(0.86)">0</i></div><div class="s" style="left:334px;top:561px;width:45px;text-align:center;"><i style="transform:scaleX(0.65)">U</i><i style="transform:scaleX(0.65)">w</i></div><div class="s" style="left:380px;top:561px;width:80px;text-align:center;"><i style="transform:scaleX(0.86)">5</i><i style="transform:scaleX(0.86)">7</i><i>.</i><i style="transform:scaleX(0.86)">7</i><i style="transform:scaleX(0.86)">3</i><i style="transform:scaleX(0.86)">5</i></div><div class="s" style="left:460px;top:561px;width:80px;text-align:center;"><i style="transform:scaleX(0.86)">1</i><i style="transform:scaleX(0.86)">2</i><i style="transform:scaleX(0.86)">0</i><i>.</i><i style="transform:scaleX(0.86)">0</i><i style="transform:scaleX(0.86)">0</i></div><div class="s" style="left:540px;top:561px;width:80px;text-align:center;"><i style="transform:scaleX(0.86)">5</i><i style="transform:scaleX(0.86)">0</i><i>.</i><i style="transform:scaleX(0.86)">0</i><i style="transform:scaleX(0.86)">0</i><i style="transform:scaleX(0.86)">0</i></div><div class="s" style="left:334px;top:578px;width:45px;text-align:center;"><i style="transform:scaleX(1.1)">I</i><i style="transform:scaleX(0.94)">u</i></div><div class="s" style="left:380px;top:578px;width:80px;text-align:center;"><i style="transform:scaleX(0.86)">0</i><i>.</i><i style="transform:scaleX(0.86)">0</i><i style="transform:scaleX(0.86)">0</i><i style="transform:scaleX(0.86)">0</i></div><div class="s" style="left:460px;top:578px;width:80px;text-align:center;"><i style="transform:scaleX(0.86)">0</i><i>.</i><i style="transform:scaleX(0.86)">0</i><i style="transform:scaleX(0.86)">0</i></div><div class="s" style="left:540px;top:578px;width:80px;text-align:center;"><i style="transform:scaleX(0.86)">5</i><i style="transform:scaleX(0.86)">0</i><i>.</i><i style="transform:scaleX(0.86)">0</i><i style="transform:scaleX(0.86)">0</i><i style="transform:scaleX(0.86)">0</i></div><div class="s" style="left:334px;top:595px;width:45px;text-align:center;"><i style="transform:scaleX(1.1)">I</i><i style="transform:scaleX(0.94)">v</i></div><div class="s" style="left:380px;top:595px;width:80px;text-align:center;"><i style="transform:scaleX(0.86)">0</i><i>.</i><i style="transform:scaleX(0.86)">0</i><i style="transform:scaleX(0.86)">0</i><i style="transform:scaleX(0.86)">0</i></div><div class="s" style="left:460px;top:595px;width:80px;text-align:center;"><i style="transform:scaleX(1.7)">-</i><i style="transform:scaleX(0.86)">1</i><i style="transform:scaleX(0.86)">2</i><i style="transform:scaleX(0.86)">0</i><i>.</i><i style="transform:scaleX(0.86)">0</i><i style="transform:scaleX(0.86)">0</i></div><div class="s" style="left:540px;top:595px;width:80px;text-align:center;"><i style="transform:scaleX(0.86)">5</i><i style="transform:scaleX(0.86)">0</i><i>.</i><i style="transform:scaleX(0.86)">0</i><i style="transform:scaleX(0.86)">0</i><i style="transform:scaleX(0.86)">0</i></div><div class="s" style="left:334px;top:612px;width:45px;text-align:center;"><i style="transform:scaleX(1.1)">I</i><i style="transform:scaleX(0.65)">w</i></div><div class="s" style="left:380px;top:612px;width:80px;text-align:center;"><i style="transform:scaleX(0.86)">0</i><i>.</i><i style="transform:scaleX(0.86)">0</i><i style="transform:scaleX(0.86)">0</i><i style="transform:scaleX(0.86)">0</i></div><div class="s" style="left:460px;top:612px;width:80px;text-align:center;"><i style="transform:scaleX(0.86)">1</i><i style="transform:scaleX(0.86)">2</i><i style="transform:scaleX(0.86)">0</i><i>.</i><i style="transform:scaleX(0.86)">0</i><i style="transform:scaleX(0.86)">0</i></div><div class="s" style="left:540px;top:612px;width:80px;text-align:center;"><i style="transform:scaleX(0.86)">5</i><i style="transform:scaleX(0.86)">0</i><i>.</i><i style="transform:scaleX(0.86)">0</i><i style="transform:scaleX(0.86)">0</i><i style="transform:scaleX(0.86)">0</i></div><svg style="left:0px;top:0px" width="971" height="719" viewBox="0 0 971 719">
<path d="M333.5 272.5 C 345 270, 360 266.5, 400 266 C 430 266, 452 267, 459.5 268.5 C 461.5 273, 461 282, 458.5 287.5 C 440 289.5, 400 288.5, 376 287.5 C 369 288, 366 290.5, 356 290.5 L 339 290 C 336 287.5, 335.5 281, 335.5 274" fill="none" stroke="#0a1ee6" stroke-width="2.8" stroke-linecap="round" stroke-linejoin="round"/>
</svg><div style="position:absolute;left:661px;top:200px;width:301px;height:171px;background:#fff"></div><div style="position:absolute;left:661px;top:200px;width:60px;height:17px;background:#f0f0f0;border-top:1px solid #fff;border-left:1px solid #fff;border-right:1px solid #696969;border-bottom:1px solid #696969;box-shadow:inset -1px -1px 0 #a0a0a0, inset 0 1px 0 #e3e3e3"></div><div class="s" style="left:661px;top:201px;width:60px;text-align:center;">开出</div><div style="position:absolute;left:721px;top:200px;width:54px;height:17px;background:#f0f0f0;border-top:1px solid #fff;border-left:1px solid #fff;border-right:1px solid #696969;border-bottom:1px solid #696969;box-shadow:inset -1px -1px 0 #a0a0a0, inset 0 1px 0 #e3e3e3"></div><div class="s" style="left:721px;top:201px;width:54px;text-align:center;">状态</div><div style="position:absolute;left:775px;top:200px;width:187px;height:17px;background:#f0f0f0;border-top:1px solid #fff;border-left:1px solid #fff;border-bottom:1px solid #696969;box-shadow:inset 0 -1px 0 #a0a0a0, inset 0 1px 0 #e3e3e3"></div><div style="position:absolute;left:661px;top:235px;width:301px;height:1px;background:#ececec"></div><div style="position:absolute;left:661px;top:252px;width:301px;height:1px;background:#ececec"></div><div style="position:absolute;left:661px;top:269px;width:301px;height:1px;background:#ececec"></div><div style="position:absolute;left:661px;top:286px;width:301px;height:1px;background:#ececec"></div><div style="position:absolute;left:661px;top:303px;width:301px;height:1px;background:#ececec"></div><div style="position:absolute;left:661px;top:320px;width:301px;height:1px;background:#ececec"></div><div style="position:absolute;left:661px;top:337px;width:301px;height:1px;background:#ececec"></div><div style="position:absolute;left:661px;top:354px;width:301px;height:1px;background:#ececec"></div><div style="position:absolute;left:721px;top:217px;width:1px;height:154px;background:#ececec"></div><div style="position:absolute;left:775px;top:217px;width:1px;height:154px;background:#ececec"></div><div class="s" style="left:661px;top:221px;width:60px;text-align:center;">开出<i style="transform:scaleX(0.86)">1</i></div><div class="s" style="left:721px;top:221px;width:54px;text-align:center;">分</div><div class="s" style="left:661px;top:238px;width:60px;text-align:center;">开出<i style="transform:scaleX(0.86)">2</i></div><div class="s" style="left:721px;top:238px;width:54px;text-align:center;">分</div><div class="s" style="left:661px;top:255px;width:60px;text-align:center;">开出<i style="transform:scaleX(0.86)">3</i></div><div class="s" style="left:721px;top:255px;width:54px;text-align:center;">分</div><div class="s" style="left:661px;top:272px;width:60px;text-align:center;">开出<i style="transform:scaleX(0.86)">4</i></div><div class="s" style="left:721px;top:272px;width:54px;text-align:center;">分</div><div class="s" style="left:661px;top:289px;width:60px;text-align:center;">开出<i style="transform:scaleX(0.86)">5</i></div><div class="s" style="left:721px;top:289px;width:54px;text-align:center;">分</div><div class="s" style="left:661px;top:306px;width:60px;text-align:center;">开出<i style="transform:scaleX(0.86)">6</i></div><div class="s" style="left:721px;top:306px;width:54px;text-align:center;">分</div><div class="s" style="left:661px;top:323px;width:60px;text-align:center;">开出<i style="transform:scaleX(0.86)">7</i></div><div class="s" style="left:721px;top:323px;width:54px;text-align:center;">分</div><div class="s" style="left:661px;top:340px;width:60px;text-align:center;">开出<i style="transform:scaleX(0.86)">8</i></div><div class="s" style="left:721px;top:340px;width:54px;text-align:center;">分</div><div class="s" style="left:756px;top:487px;">整定值<i>:</i><i>&nbsp;</i><i>&nbsp;</i><i style="transform:scaleX(0.86)">5</i><i>.</i><i style="transform:scaleX(0.86)">0</i><i style="transform:scaleX(0.86)">0</i><i style="transform:scaleX(0.86)">0</i></div><div class="s" style="left:755px;top:520px;">整定时间<i>:</i><i>&nbsp;</i><i>&nbsp;</i><i style="transform:scaleX(0.86)">0</i><i>.</i><i style="transform:scaleX(0.86)">0</i><i style="transform:scaleX(0.86)">0</i><i style="transform:scaleX(0.86)">0</i></div><div class="s" style="left:755px;top:551px;">补偿系数<i>:</i><i>&nbsp;</i><i>&nbsp;</i><i style="transform:scaleX(0.86)">0</i><i>.</i><i style="transform:scaleX(0.86)">6</i><i style="transform:scaleX(0.86)">6</i><i style="transform:scaleX(0.86)">7</i></div><div class="s" style="left:755px;top:582px;">角度<i>:</i><i>&nbsp;</i><i>&nbsp;</i><i style="transform:scaleX(0.86)">0</i><i>.</i><i style="transform:scaleX(0.86)">0</i><i style="transform:scaleX(0.86)">0</i><i style="transform:scaleX(0.86)">0</i></div></body></html>
